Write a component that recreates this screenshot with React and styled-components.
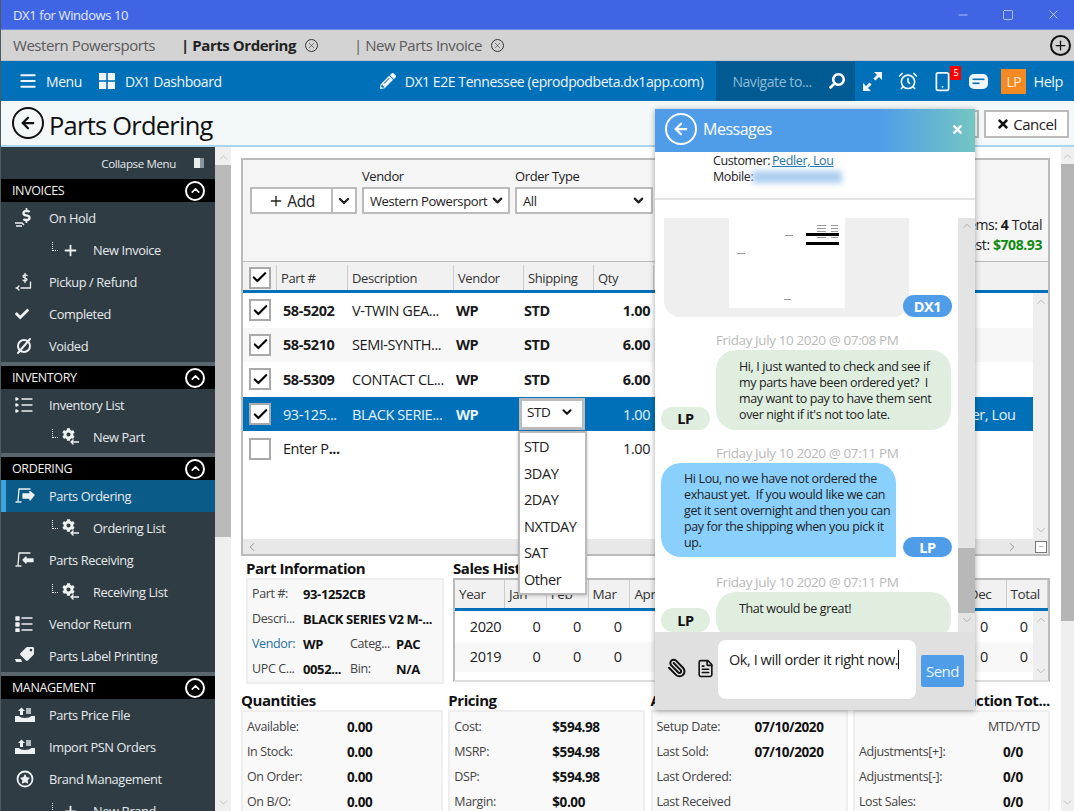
import React from 'react';
import styled, { createGlobalStyle } from 'styled-components';
import {
  Menu as MenuIcon, Minus, Square, X, AlarmClock, Smartphone, ChevronUp, ChevronDown,
  ChevronLeft, ChevronRight, Plus, Paperclip, FileText, ArrowLeft, Check,
} from 'lucide-react';
import { FaPencilAlt, FaSearch, FaCog, FaStar, FaTag, FaCheck, FaDollarSign, FaTimes } from 'react-icons/fa';

const GlobalStyle = createGlobalStyle`
  html, body {
    margin: 0;
    padding: 0;
    background: #fff;
  }
  * {
    box-sizing: border-box;
    letter-spacing: -0.03em;
  }
  svg {
    flex: none;
  }
  body {
    font-family: "Open Sans", "Noto Sans", "Liberation Sans", sans-serif;
    color: #1c1c1c;
  }
`;

const Page = styled.div`
  position: relative;
  width: 1074px;
  height: 811px;
  overflow: hidden;
  display: flex;
  flex-direction: column;
  border-left: 1px solid #4d5a62;
`;

/* window title bar */
const TitleBar = styled.div`
  height: 30px;
  background: #3f65e5;
  color: #e6ebfd;
  font-size: 13px;
  display: flex;
  align-items: center;
  padding-left: 12px;
  border-bottom: 1px solid #6d8aeb;
`;

const WindowControls = styled.div`
  margin-left: auto;
  display: flex;
  align-items: center;
  gap: 32px;
  padding-right: 13px;
  color: #fff;
`;

/* open tabs */
const TabBar = styled.div`
  height: 31px;
  background: #d3d3d3;
  display: flex;
  align-items: center;
  padding-left: 12px;
  font-size: 15px;
  color: #555;
  border-bottom: 1px solid #b9c4cc;
`;

const Tab = styled.div`
  display: flex;
  align-items: center;
  gap: 9px;
  margin-right: ${p => p.$gap}px;
  font-weight: ${p => (p.$active ? 700 : 400)};
  color: ${p => (p.$active ? '#222' : '#5a5a5a')};
  white-space: nowrap;
`;

const TabClose = styled.span`
  width: 13px;
  height: 13px;
  border: 1px solid #333;
  border-radius: 50%;
  display: flex;
  align-items: center;
  justify-content: center;
  color: #333;
`;

const AddTab = styled.span`
  margin-left: auto;
  margin-right: 3px;
  width: 21px;
  height: 21px;
  border: 2px solid #111;
  border-radius: 50%;
  display: flex;
  align-items: center;
  justify-content: center;
  color: #111;
`;

/* blue navigation bar */
const NavBar = styled.div`
  height: 40px;
  background: #0071b8;
  color: #f0f6fb;
  display: flex;
  align-items: center;
  padding-left: 17px;
  font-size: 14px;
  white-space: nowrap;
`;

const NavItem = styled.div`
  display: flex;
  align-items: center;
  gap: ${p => p.$gap || 9}px;
  margin-right: ${p => p.$right || 0}px;
`;

const NavIcons = styled.div`
  position: relative;
  display: flex;
  align-items: center;
  justify-content: center;
  width: ${p => p.$w}px;
  margin-right: ${p => p.$right || 0}px;
`;

const Spacer = styled.div`
  flex: 1;
`;

const SearchBox = styled.div`
  width: 139px;
  height: 100%;
  margin: 0 8px 0 13px;
  background: #005b93;
  color: #8fbcd8;
  display: flex;
  align-items: center;
  justify-content: space-between;
  padding: 0 10px 0 16px;
`;

const SearchGlass = styled(FaSearch)`
  color: #fff;
  transform: scaleX(-1);
`;

const Badge = styled.span`
  position: absolute;
  top: -5px;
  right: -12px;
  width: 11px;
  height: 14px;
  background: #f00;
  color: #fff;
  font-size: 9px;
  line-height: 14px;
  text-align: center;
`;

const Avatar = styled.div`
  width: 25px;
  height: 25px;
  background: #f58a24;
  color: #fde9d5;
  display: flex;
  align-items: center;
  justify-content: center;
  font-size: 14px;
  margin-right: 7px;
`;

const HelpLabel = styled.span`
  margin-right: 11px;
  font-size: 14.5px;
`;

/* page heading */
const Heading = styled.div`
  height: 46px;
  background: #f3f8fb;
  border-bottom: 2px solid #a9d5ee;
  display: flex;
  align-items: center;
  padding-left: 11px;
`;

const BackCircle = styled.div`
  width: ${p => p.$size}px;
  height: ${p => p.$size}px;
  flex: none;
  border: 2px solid ${p => p.$color};
  border-radius: 50%;
  color: ${p => p.$color};
  display: flex;
  align-items: center;
  justify-content: center;
`;

const PageTitle = styled.h1`
  margin: 3px auto 0 5px;
  font-size: 25.5px;
  font-weight: 400;
  color: #111;
`;

const HeadButton = styled.div`
  width: 85px;
  height: 28px;
  margin: 1px 5px 0 0;
  background: #fff;
  border: 2px solid #bbb;
  display: flex;
  align-items: center;
  justify-content: center;
  gap: 3px;
  font-size: 15px;
  color: #222;
`;

/* body: side menu + content */
const Body = styled.div`
  flex: 1;
  min-height: 0;
  display: flex;
`;

const Sidebar = styled.nav`
  width: 214px;
  flex: none;
  background: #2f3c44;
  color: #e6eaec;
  font-size: 12.8px;
`;

const Collapse = styled.div`
  height: 32px;
  display: flex;
  align-items: center;
  justify-content: flex-end;
  gap: 18px;
  padding-right: 11px;
  font-size: 11.5px;
`;

const CollapseBox = styled.span`
  width: 10px;
  height: 10px;
  background: #e9edef;
  border-right: 4px solid #8a969d;
`;

const SectionHead = styled.div`
  height: 23px;
  background: #000;
  box-sizing: content-box;
  border-top: ${p => (p.$first ? 'none' : '4px solid #5a666d')};
  display: flex;
  align-items: center;
  justify-content: space-between;
  padding: 0 10px 0 11px;
  font-size: 12.5px;
  color: #f0f0f0;
`;

const Toggle = styled.span`
  width: 20px;
  height: 20px;
  border: 2px solid #fff;
  border-radius: 50%;
  display: flex;
  align-items: center;
  justify-content: center;
  color: #fff;
`;

const SideItem = styled.div`
  position: relative;
  height: 32px;
  display: flex;
  align-items: center;
  padding-left: ${p => (p.$sub ? 51 : 14)}px;
  background: ${p => (p.$active ? '#0b5b89' : 'transparent')};
  border-left: ${p => (p.$active ? '5px solid #36a5e0' : 'none')};
  white-space: nowrap;
`;

const IconSlot = styled.span`
  width: ${p => (p.$sub ? 41 : 34)}px;
  margin-left: ${p => (p.$active ? -5 : 0)}px;
  display: flex;
  align-items: center;
  gap: 4px;
  flex: none;
  color: #eef1f2;
`;

const Hook = styled.span`
  width: 6px;
  height: 9px;
  margin-bottom: 8px;
  flex: none;
  border-left: 1px dotted #fff;
  border-bottom: 1px dotted #fff;
`;

const SideScroll = styled.div`
  width: 16px;
  flex: none;
  background: #efefef;
  display: flex;
  flex-direction: column;
  align-items: center;
  color: #b5b5b5;
  padding: 4px 0 2px;
`;

const SideThumb = styled.div`
  align-self: stretch;
  height: 372px;
  background: #b9b9b9;
  margin-top: 1px;
`;

const Content = styled.main`
  flex: 1;
  min-width: 0;
  background: #fff;
  padding: 11px 11px 0 10px;
  display: flex;
  flex-direction: column;
`;

const PageScroll = styled.div`
  width: 13px;
  flex: none;
  background: #efefef;
  display: flex;
  flex-direction: column;
  align-items: center;
  color: #b5b5b5;
  padding: 3px 0 2px;
`;

const PageThumb = styled.div`
  align-self: stretch;
  height: 457px;
  margin-top: 1px;
  background: #b5b5b5;
`;

const ScrollGap = styled.div`
  flex: 1;
`;

/* filter toolbar */
const Filters = styled.section`
  flex: none;
  height: 104px;
  background: #f5f5f5;
  border: 2px solid #bbb;
  border-bottom-width: 1px;
  display: flex;
  align-items: flex-start;
  padding: 8px 6px 0 7px;
`;

const Field = styled.div`
  margin-left: ${p => p.$left || 0}px;
  display: flex;
  flex-direction: column;
  font-size: 13px;
`;

const FieldLabel = styled.label`
  height: 17px;
  line-height: 17px;
  margin-bottom: 2px;
`;

const SplitButton = styled.div`
  display: flex;
`;

const Control = styled.div`
  width: ${p => p.$w}px;
  height: 27px;
  background: #fff;
  border: 2px solid #bbb;
  border-left-width: ${p => (p.$joined ? 0 : 2)}px;
  display: flex;
  align-items: center;
  justify-content: ${p => (p.$center ? 'center' : 'space-between')};
  gap: 3px;
  padding: ${p => (p.$center ? '0' : '0 5px 0 6px')};
  font-size: ${p => (p.$big ? 15.5 : 13)}px;
  white-space: nowrap;
  color: #222;
`;

const Totals = styled.div`
  margin: 47px 0 0 auto;
  text-align: right;
  font-size: 14px;
  line-height: 20px;
  white-space: nowrap;
`;

const Money = styled.b`
  color: #0f8a12;
`;

/* parts grid */
const PartsGrid = styled.section`
  height: 294px;
  border: 2px solid #bbb;
  border-top: none;
  display: flex;
  flex-direction: column;
  flex: none;
  font-size: 14.5px;
`;

const HeaderRow = styled.div`
  flex: none;
  height: 31px;
  padding-top: 3px;
  background: #f1f1f1;
  border-bottom: 3px solid #0071b8;
  display: grid;
  grid-template-columns: 34px 71px 106px 70px 70px 60px;
  font-size: 13px;
  color: #333;
`;

const HeaderCell = styled.div`
  display: flex;
  align-items: center;
  padding-left: 4px;
  border-right: 1px solid #ccc;
  &:first-child {
    justify-content: center;
    padding-left: 0;
  }
`;

const GridBody = styled.div`
  flex: 1;
  min-height: 0;
  display: flex;
`;

const Rows = styled.div`
  flex: 1;
  min-width: 0;
`;

const Row = styled.div`
  height: 34.6px;
  display: grid;
  grid-template-columns: 34px 71px 106px 70px 70px 60px 1fr;
  align-items: center;
  background: ${p => (p.$selected ? '#0071b8' : p.$striped ? '#f7f7f7' : '#fff')};
  color: ${p => (p.$selected ? '#e5f2fa' : '#1a1a1a')};
`;

const Cell = styled.div`
  position: relative;
  padding-left: ${p => p.$pad || 0}px;
  font-weight: ${p => (p.$bold ? 700 : 400)};
  text-align: ${p => (p.$right ? 'right' : 'left')};
  padding-right: ${p => (p.$right ? 4 : 0)}px;
  white-space: nowrap;
`;

const CheckBox = styled.span`
  width: 22px;
  height: 22px;
  margin-left: ${p => p.$left || 0}px;
  background: #fff;
  border: 2px solid #a9a9a9;
  display: flex;
  align-items: center;
  justify-content: center;
  color: #000;
`;

const VScroll = styled.div`
  width: 15px;
  flex: none;
  background: #eee;
  display: flex;
  flex-direction: column;
  align-items: center;
  justify-content: space-between;
  color: #b5b5b5;
  padding: 2px 0;
`;

const HScroll = styled.div`
  flex: none;
  height: 15px;
  background: #e8e8e8;
  display: flex;
  align-items: center;
  justify-content: space-between;
  padding: 0 1px 0 2px;
  color: #888;
`;

const HScrollEnd = styled.span`
  display: flex;
  align-items: center;
`;

const CornerBox = styled.span`
  width: 12px;
  height: 12px;
  margin-left: 16px;
  background: #fff;
  border: 1px solid #777;
  display: flex;
  align-items: center;
  justify-content: center;
  font-size: 9px;
  line-height: 1;
`;

const ShipSelect = styled.div`
  width: 66px;
  height: 32px;
  margin-left: -5px;
  background: #fff;
  border: 3px solid #bbb;
  color: #222;
  font-size: 13.5px;
  display: flex;
  align-items: center;
  justify-content: space-between;
  padding: 0 8px 4px 5px;
`;

const ShipList = styled.ul`
  position: absolute;
  z-index: 5;
  top: 33px;
  left: -6px;
  width: 69px;
  margin: 0;
  padding: 1px 0 0 4px;
  list-style: none;
  background: #fff;
  border: 2px solid #bbb;
  box-shadow: 0 1px 3px rgba(0, 0, 0, 0.2);
  color: #222;
  font-size: 14.5px;
`;

const ShipOption = styled.li`
  height: 26.5px;
  line-height: 26px;
`;

/* part details + sales */
const DetailRow = styled.div`
  display: flex;
  padding: 4px 0 0 5px;
  flex: none;
  gap: 9px;
`;

const SectionTitle = styled.h3`
  margin: 0 0 2px;
  height: 16px;
  line-height: 16px;
  font-size: 15px;
  font-weight: 700;
  color: #111;
  white-space: nowrap;
  text-align: ${p => (p.$right ? 'right' : 'left')};
`;

const Block = styled.div`
  width: ${p => p.$w}px;
  flex: ${p => (p.$grow ? 1 : 'none')};
  min-width: 0;
`;

const InfoCard = styled.div`
  height: 106px;
  background: #f8f8f8;
  border: 2px solid #eee;
  display: grid;
  grid-template-columns: 51px 47px 46px 1fr;
  grid-auto-rows: 25px;
  align-items: center;
  padding: 1px 4px;
  font-size: 12.5px;
  white-space: nowrap;
  color: #444;
`;

const InfoLabel = styled.span`
  color: ${p => (p.$link ? '#1e6f9f' : '#444')};
`;

const InfoValue = styled.b`
  color: #111;
  font-size: 13px;
  grid-column: ${p => (p.$wide ? 'span 3' : 'auto')};
`;

const SalesGrid = styled.div`
  height: 104px;
  border: 2px solid #bbb;
  border-bottom-color: #ddd;
  display: flex;
  flex-direction: column;
  font-size: 13.5px;
`;

const SalesHead = styled.div`
  flex: none;
  height: 31px;
  background: #f1f1f1;
  border-bottom: 3px solid #0071b8;
  display: grid;
  grid-template-columns: 50px repeat(12, 41.8px) 1fr;
  color: #333;
`;

const SalesHeadCell = styled.div`
  display: flex;
  align-items: center;
  padding-left: 4px;
  border-right: 1px solid #ccc;
`;

const SalesRow = styled.div`
  height: 30.5px;
  background: ${p => (p.$striped ? '#f8f8f8' : '#fff')};
  display: grid;
  grid-template-columns: 61px repeat(12, 40.7px) 1fr;
  align-items: center;
  text-align: center;
  font-size: 14.5px;
  color: #222;
`;

const SalesTotal = styled.span`
  padding-left: 10px;
`;

/* bottom stat cards */
const StatsRow = styled.div`
  margin-top: 8px;
  display: grid;
  grid-template-columns: 202px repeat(3, 197px);
  column-gap: 5.3px;
  flex: none;
`;

const StatCard = styled.div`
  height: 110px;
  background: #f9f9f9;
  border: 2px solid #eee;
  border-bottom: none;
  padding: 2px 4px;
  display: grid;
  grid-template-columns: ${p => p.$label}px 1fr;
  grid-auto-rows: 25px;
  align-items: center;
  font-size: 12.5px;
  color: #444;
  white-space: nowrap;
`;

const StatValue = styled.b`
  color: #111;
  font-size: 13.5px;
`;

const StatNote = styled.span`
  color: #444;
  margin-left: -15px;
`;

/* messages popup, lies over the page */
const Popup = styled.aside`
  position: absolute;
  z-index: 10;
  left: 654px;
  top: 109px;
  width: 320px;
  height: 601px;
  background: #fff;
  box-shadow: 0 1px 6px rgba(0, 0, 0, 0.35);
  display: flex;
  flex-direction: column;
  font-size: 13px;
  color: #222;
`;

const PopupHead = styled.header`
  height: 43px;
  flex: none;
  background: linear-gradient(90deg, #4f9de9 0%, #4f9de9 70%, #74c6c3 100%);
  color: #fff;
  display: flex;
  align-items: center;
  padding: 0 11px 3px 10px;
  gap: 6px;
  font-size: 16px;
`;

const PopupClose = styled.span`
  margin-left: auto;
  display: flex;
`;

const CustomerInfo = styled.div`
  height: 48px;
  flex: none;
  padding: 1px 0 0 58px;
  line-height: 16px;
  border-bottom: 2px solid #e4e4e4;
  font-size: 12.5px;
`;

const CustomerLink = styled.a`
  color: #1f74a6;
  text-decoration: underline;
  margin-left: -1px;
`;

const BlurredNumber = styled.span`
  display: inline-block;
  width: 90px;
  height: 12px;
  margin-left: -4px;
  vertical-align: -2px;
  background: #aacdf0;
  filter: blur(3px);
`;

const Pane = styled.div`
  flex: 1;
  min-height: 0;
  display: flex;
  padding-top: 18px;
`;

const MessageList = styled.div`
  flex: 1;
  min-width: 0;
  overflow: hidden;
  padding-left: 9px;
`;

const Attachment = styled.div`
  width: 245px;
  height: 99px;
  flex: none;
  background: #efefef;
  border-radius: 0 0 16px 16px;
  display: flex;
  justify-content: center;
  align-items: flex-start;
`;

const MsgRow = styled.div`
  display: flex;
  align-items: flex-end;
  margin-left: ${p => (p.$inbound ? -3 : 0)}px;
  gap: ${p => p.$gap || 0}px;
`;

const Stamp = styled.div`
  margin: ${p => p.$top}px 0 2px 52px;
  height: 16px;
  line-height: 16px;
  color: #b9b9b9;
  font-size: 13.5px;
  white-space: nowrap;
`;

const Bubble = styled.div`
  width: 235px;
  height: ${p => p.$h}px;
  flex: none;
  background: ${p => (p.$blue ? '#89d0ff' : '#e0eedf')};
  border-radius: ${p => (p.$blue ? '20px 20px 0 20px' : '20px')};
  padding: ${p => (p.$blue ? '8px 0 0 23px' : '9px 12px 0 23px')};
  line-height: 16px;
  font-size: 12.5px;
  color: #222;
`;

const Pill = styled.span`
  width: 49px;
  height: ${p => p.$h || 23}px;
  flex: none;
  margin-left: ${p => p.$left || 0}px;
  margin-bottom: ${p => p.$bottom || 0}px;
  border-radius: 12px;
  background: ${p => (p.$blue ? '#4f9de9' : '#e0eedf')};
  color: ${p => (p.$blue ? '#fff' : '#111')};
  font-weight: 700;
  font-size: 14.5px;
  display: flex;
  align-items: center;
  justify-content: center;
`;

const MsgScroll = styled.div`
  width: 17px;
  flex: none;
  background: #e4e4e4;
  display: flex;
  flex-direction: column;
  align-items: center;
  color: #aaa;
  padding-top: 1px;
`;

const MsgThumb = styled.div`
  align-self: stretch;
  height: 65px;
  background: #b8b8b8;
  margin: 315px 0 0;
`;

const Composer = styled.div`
  height: 78px;
  flex: none;
  background: #e0e0e0;
  display: flex;
  align-items: flex-start;
  padding: 8px 11px 0 12px;
`;

const ComposerTools = styled.div`
  width: 51px;
  margin-top: 18px;
  display: flex;
  align-items: center;
  gap: 9px;
  color: #111;
  flex: none;
`;

const ClipIcon = styled(Paperclip)`
  transform: scaleX(-1);
`;

const TextBox = styled.div`
  width: 198px;
  height: 59px;
  background: #fff;
  border-radius: 8px;
  padding: 10px 11px;
  font-size: 14.5px;
  color: #222;
  white-space: nowrap;
`;

const Caret = styled.span`
  border-right: 1px solid #111;
`;

const SendButton = styled.div`
  width: 43px;
  height: 32px;
  margin: 15px 0 0 5px;
  background: #4f9de9;
  color: #eaf4fd;
  border-radius: 2px;
  font-size: 15px;
  display: flex;
  align-items: center;
  justify-content: center;
`;

/* small drawn icons */
const Svg = ({ w = 20, h = 20, children, stroke = 'none', fill = 'currentColor', sw = 1.5 }) => (
  <svg width={w} height={h} viewBox={`0 0 ${w} ${h}`} fill={fill} stroke={stroke} strokeWidth={sw} strokeLinecap="round" strokeLinejoin="round">
    {children}
  </svg>
);

/* an icon glyph with a small drawn extra laid over it */
const IconStack = styled.span`
  position: relative;
  display: flex;
  align-items: flex-start;
  justify-content: ${p => (p.$center ? 'center' : 'flex-start')};
  width: ${p => p.$w}px;
  height: ${p => p.$h}px;
  & > svg:last-child {
    position: absolute;
    left: 0;
    top: 0;
  }
`;

const HoldGlyph = styled(FaDollarSign)`
  margin-left: 4px;
`;

const TagGlyph = styled(FaTag)`
  margin-left: 5px;
  transform: rotate(90deg);
`;

const StarGlyph = styled(FaStar)`
  margin-top: 4px;
`;

const TileIcon = () => (
  <Svg w={16} h={16}>
    <rect x="0" y="0" width="7.2" height="7.2" />
    <rect x="8.8" y="0" width="7.2" height="7.2" />
    <rect x="0" y="8.8" width="7.2" height="7.2" />
    <rect x="8.8" y="8.8" width="7.2" height="7.2" />
  </Svg>
);

const ExpandIcon = () => (
  <Svg w={19} h={19}>
    <path d="M11 0h8v8l-3-3-3.6 3.6-2-2L14 3z" />
    <path d="M8 19H0v-8l3 3 3.6-3.6 2 2L5 16z" />
  </Svg>
);

const ChatIcon = () => (
  <Svg w={19} h={15}>
    <rect x="0" y="0" width="19" height="15" rx="5" />
    <rect x="3.5" y="4.5" width="12" height="1.6" fill="#0071b8" />
    <rect x="3.5" y="8.5" width="7" height="1.6" fill="#0071b8" />
  </Svg>
);

const BackArrow = () => <ArrowLeft size={18} strokeWidth={3} />;

const HoldIcon = () => (
  <IconStack $w={20} $h={20}>
    <HoldGlyph size={15} />
    <svg width="20" height="20" fill="none" stroke="currentColor" strokeWidth="1.4">
      <path d="M0 15h7l2 2M1 18h6" />
    </svg>
  </IconStack>
);

const RefundIcon = () => (
  <Svg w={20} h={20} fill="none" stroke="currentColor" sw={1.3}>
    <path d="M15.5 10v6H6M3 16l-2 0M4 14l-2 2 2 2" />
    <path d="M12 3.5c-1-1-4-1-4 .8s4 1.2 4 3-3 2-4 .8M10 1.5v9" />
  </Svg>
);

const VoidIcon = () => (
  <Svg w={18} h={18} fill="none" stroke="currentColor" sw={2}>
    <circle cx="9" cy="9" r="6" />
    <path d="M3 16L15 2" />
  </Svg>
);

const ListIcon = ({ faint }) => (
  <Svg w={18} h={16} fill="none" stroke="currentColor" sw={1.4}>
    <path d="M7 2h10M7 8h10M7 14h10" />
    <path d={faint ? 'M1 1h3v3H1zM1 7h3v3H1zM1 13h3v3H1z' : 'M1 1l2 1-2 1zM1 7l2 1-2 1zM1 13l2 1-2 1z'} fill="currentColor" />
  </Svg>
);

const TransferIcon = ({ flip }) => (
  <Svg w={20} h={16} fill="none" stroke="currentColor" sw={1.3}>
    <path d="M3 13L4 1h11" />
    <path d="M1 14h5" strokeDasharray="1 1" />
    {flip
      ? <path d="M8 8l3-3v2h7v2.5H11V11z" fill="currentColor" />
      : <path d="M19 7l-4-3.5V6H8v4h7v2z" fill="currentColor" />}
  </Svg>
);

const GearArrow = () => (
  <IconStack $w={18} $h={18}>
    <FaCog size={13} />
    <svg width="18" height="18" fill="none" stroke="currentColor" strokeWidth="1.3">
      <path d="M9 14h8M11.5 11.5L9 14l2.5 2.5" />
    </svg>
  </IconStack>
);

const LabelIcon = () => (
  <IconStack $w={20} $h={18}>
    <TagGlyph size={14} />
    <svg width="20" height="18" fill="currentColor">
      <path d="M0 12h6l1 3H1z" />
    </svg>
  </IconStack>
);

const TrayIcon = () => (
  <Svg w={20} h={16} fill="currentColor">
    <path d="M0 9h4c1 2.5 11 2.5 12 0h4v6H0z" />
    <path d="M5 8V4H3l3.5-3.5L10 4H8v4z" />
    <path d="M11 1h5v6h-5z" opacity=".7" />
  </Svg>
);

const BrandIcon = () => (
  <IconStack $w={20} $h={18} $center>
    <StarGlyph size={10} />
    <svg width="20" height="18" fill="none" stroke="currentColor" strokeWidth="1.8">
      <circle cx="10" cy="9" r="7.5" />
    </svg>
  </IconStack>
);

const menu = [
  {
    title: 'INVOICES', items: [
      { label: 'On Hold', icon: <HoldIcon /> },
      { label: 'New Invoice', sub: true, icon: <Plus size={17} strokeWidth={2.5} /> },
      { label: 'Pickup / Refund', icon: <RefundIcon /> },
      { label: 'Completed', icon: <FaCheck size={14} /> },
      { label: 'Voided', icon: <VoidIcon /> },
    ],
  },
  {
    title: 'INVENTORY', items: [
      { label: 'Inventory List', icon: <ListIcon /> },
      { label: 'New Part', sub: true, icon: <GearArrow /> },
    ],
  },
  {
    title: 'ORDERING', items: [
      { label: 'Parts Ordering', active: true, icon: <TransferIcon /> },
      { label: 'Ordering List', sub: true, icon: <GearArrow /> },
      { label: 'Parts Receiving', icon: <TransferIcon flip /> },
      { label: 'Receiving List', sub: true, icon: <GearArrow /> },
      { label: 'Vendor Return', icon: <ListIcon faint /> },
      { label: 'Parts Label Printing', icon: <LabelIcon /> },
    ],
  },
  {
    title: 'MANAGEMENT', items: [
      { label: 'Parts Price File', icon: <TrayIcon /> },
      { label: 'Import PSN Orders', icon: <TrayIcon /> },
      { label: 'Brand Management', icon: <BrandIcon /> },
      { label: 'New Brand', sub: true, icon: <Plus size={17} strokeWidth={2.5} /> },
    ],
  },
];

const parts = [
  { no: '58-5202', desc: 'V-TWIN GEA...', qty: '1.00' },
  { no: '58-5210', desc: 'SEMI-SYNTH...', qty: '6.00', striped: true },
  { no: '58-5309', desc: 'CONTACT CL...', qty: '6.00' },
];

const shipping = ['STD', '3DAY', '2DAY', 'NXTDAY', 'SAT', 'Other'];

// the middle months sit behind the messages popup, so their cells stay empty
const months = ['Jan', 'Feb', 'Mar', 'Apr', '', '', '', '', '', '', '', 'Dec'];

const stats = [
  {
    title: 'Quantities', label: 100,
    rows: [['Available:', '0.00'], ['In Stock:', '0.00'], ['On Order:', '0.00'], ['On B/O:', '0.00']],
  },
  {
    title: 'Pricing', label: 98,
    rows: [['Cost:', '$594.98'], ['MSRP:', '$594.98'], ['DSP:', '$594.98'], ['Margin:', '$0.00']],
  },
  {
    title: 'Activity', label: 98,
    rows: [['Setup Date:', '07/10/2020'], ['Last Sold:', '07/10/2020'], ['Last Ordered:', ''], ['Last Received', '']],
  },
  {
    title: 'Transaction Tot...', label: 144, right: true,
    rows: [['', 'MTD/YTD', true], ['Adjustments[+]:', '0/0'], ['Adjustments[-]:', '0/0'], ['Lost Sales:', '0/0']],
  },
];

function AppTabs() {
  return (
    <TabBar>
      <Tab $gap={26}>Western Powersports</Tab>
      <Tab $active $gap={36}>
        | Parts Ordering
        <TabClose><X size={9} strokeWidth={1.5} /></TabClose>
      </Tab>
      <Tab>
        | New Parts Invoice
        <TabClose><X size={9} strokeWidth={1.5} /></TabClose>
      </Tab>
      <AddTab><Plus size={15} strokeWidth={2} /></AddTab>
    </TabBar>
  );
}

function AppNav() {
  return (
    <NavBar>
      <NavItem $gap={8} $right={17}><MenuIcon size={20} strokeWidth={2.4} />Menu</NavItem>
      <NavItem $gap={10}><TileIcon />DX1 Dashboard</NavItem>
      <Spacer />
      <NavItem $gap={9}><FaPencilAlt size={16} />DX1 E2E Tennessee (eprodpodbeta.dx1app.com)</NavItem>
      <SearchBox>
        Navigate to...
        <SearchGlass size={16} />
      </SearchBox>
      <NavIcons $w={19} $right={16}><ExpandIcon /></NavIcons>
      <NavIcons $w={19} $right={19}><AlarmClock size={20} strokeWidth={2} /></NavIcons>
      <NavIcons $w={13} $right={20}>
        <Smartphone size={21} strokeWidth={2} />
        <Badge>5</Badge>
      </NavIcons>
      <NavIcons $w={19} $right={13}><ChatIcon /></NavIcons>
      <Avatar>LP</Avatar>
      <HelpLabel>Help</HelpLabel>
    </NavBar>
  );
}

function SideMenu() {
  return (
    <Sidebar>
      <Collapse>Collapse Menu <CollapseBox /></Collapse>
      {menu.map((section, i) => (
        <div key={section.title}>
          <SectionHead $first={i === 0}>
            {section.title}
            <Toggle><ChevronUp size={13} strokeWidth={3} /></Toggle>
          </SectionHead>
          {section.items.map(item => (
            <SideItem key={item.label} $sub={item.sub} $active={item.active}>
              <IconSlot $sub={item.sub} $active={item.active}>
                {item.sub && <Hook />}
                {item.icon}
              </IconSlot>
              {item.label}
            </SideItem>
          ))}
        </div>
      ))}
    </Sidebar>
  );
}

function PartRow({ no, desc, qty, striped }) {
  return (
    <Row $striped={striped}>
      <CheckBox $left={6}><Check size={17} strokeWidth={3} /></CheckBox>
      <Cell $bold $pad={6}>{no}</Cell>
      <Cell $pad={4}>{desc}</Cell>
      <Cell $bold $pad={2}>WP</Cell>
      <Cell $bold>STD</Cell>
      <Cell $bold $right>{qty}</Cell>
    </Row>
  );
}

function PartsTable() {
  return (
    <PartsGrid>
      <HeaderRow>
        <HeaderCell><CheckBox><Check size={17} strokeWidth={3} /></CheckBox></HeaderCell>
        <HeaderCell>Part #</HeaderCell>
        <HeaderCell>Description</HeaderCell>
        <HeaderCell>Vendor</HeaderCell>
        <HeaderCell>Shipping</HeaderCell>
        <HeaderCell>Qty</HeaderCell>
      </HeaderRow>
      <GridBody>
        <Rows>
          {parts.map(p => <PartRow key={p.no} {...p} />)}
          <Row $selected>
            <CheckBox $left={6}><Check size={17} strokeWidth={3} /></CheckBox>
            <Cell $pad={6}>93-125...</Cell>
            <Cell $pad={4}>BLACK SERIE...</Cell>
            <Cell $bold $pad={2}>WP</Cell>
            <Cell>
              <ShipSelect>STD <ChevronDown size={14} strokeWidth={3.5} color="#111" /></ShipSelect>
              <ShipList>
                {shipping.map(s => <ShipOption key={s}>{s}</ShipOption>)}
              </ShipList>
            </Cell>
            <Cell $right>1.00</Cell>
            <Cell $pad={290}>Pedler, Lou</Cell>
          </Row>
          <Row>
            <CheckBox $left={6} />
            <Cell $pad={6}>Enter P<b>...</b></Cell>
            <Cell />
            <Cell />
            <Cell />
            <Cell $right>1.00</Cell>
          </Row>
        </Rows>
        <VScroll>
          <ChevronUp size={14} strokeWidth={1.5} />
          <ChevronDown size={14} strokeWidth={1.5} />
        </VScroll>
      </GridBody>
      <HScroll>
        <ChevronLeft size={14} strokeWidth={1.5} />
        <HScrollEnd>
          <ChevronRight size={14} strokeWidth={1.5} />
          <CornerBox>−</CornerBox>
        </HScrollEnd>
      </HScroll>
    </PartsGrid>
  );
}

function PartDetails() {
  return (
    <DetailRow>
      <Block $w={198}>
        <SectionTitle>Part Information</SectionTitle>
        <InfoCard>
          <InfoLabel>Part #:</InfoLabel><InfoValue $wide>93-1252CB</InfoValue>
          <InfoLabel>Descri...</InfoLabel><InfoValue $wide>BLACK SERIES V2 M-...</InfoValue>
          <InfoLabel $link>Vendor:</InfoLabel><InfoValue>WP</InfoValue>
          <InfoLabel>Categ...</InfoLabel><InfoValue>PAC</InfoValue>
          <InfoLabel>UPC C...</InfoLabel><InfoValue>0052...</InfoValue>
          <InfoLabel>Bin:</InfoLabel><InfoValue>N/A</InfoValue>
        </InfoCard>
      </Block>
      <Block $grow>
        <SectionTitle>Sales History</SectionTitle>
        <SalesGrid>
          <SalesHead>
            <SalesHeadCell>Year</SalesHeadCell>
            {months.map((m, i) => <SalesHeadCell key={i}>{m}</SalesHeadCell>)}
            <SalesHeadCell>Total</SalesHeadCell>
          </SalesHead>
          <GridBody>
            <Rows>
              {['2020', '2019'].map((year, y) => (
                <SalesRow key={year} $striped={y === 1}>
                  <span>{year}</span>
                  {months.map((m, i) => <span key={i}>{m && m !== 'Apr' ? '0' : ''}</span>)}
                  <SalesTotal>0</SalesTotal>
                </SalesRow>
              ))}
            </Rows>
            <VScroll>
              <ChevronUp size={14} strokeWidth={1.5} />
              <ChevronDown size={14} strokeWidth={1.5} />
            </VScroll>
          </GridBody>
        </SalesGrid>
      </Block>
    </DetailRow>
  );
}

function MessagesPopup() {
  return (
    <Popup>
      <PopupHead>
        <BackCircle $size={32} $color="#fff"><BackArrow /></BackCircle>
        Messages
        <PopupClose><FaTimes size={13} /></PopupClose>
      </PopupHead>
      <CustomerInfo>
        <div>Customer: <CustomerLink>Pedler, Lou</CustomerLink></div>
        <div>Mobile: <BlurredNumber /></div>
      </CustomerInfo>
      <Pane>
        <MessageList>
          <MsgRow>
            <Attachment>
              <svg width="116" height="90" viewBox="0 0 116 90">
                <rect width="116" height="90" fill="#fff" />
                <g fill="#999">
                  <rect x="88" y="7" width="9" height="1" /><rect x="102" y="7" width="7" height="1" />
                  <rect x="88" y="10" width="9" height="1" /><rect x="102" y="10" width="7" height="1" />
                  <rect x="88" y="13" width="9" height="1" /><rect x="102" y="13" width="7" height="1" />
                  <rect x="56" y="17" width="8" height="1" />
                  <rect x="88" y="19" width="9" height="1" /><rect x="102" y="19" width="7" height="1" />
                  <rect x="8" y="35" width="8" height="1" />
                  <rect x="55" y="81" width="7" height="1" />
                </g>
                <rect x="77" y="15" width="33" height="3" fill="#000" />
                <rect x="77" y="24" width="33" height="3" fill="#000" />
              </svg>
            </Attachment>
            <Pill $blue $h={22} $left={-6}>DX1</Pill>
          </MsgRow>
          <Stamp $top={15}>Friday July 10 2020 @ 07:08 PM</Stamp>
          <MsgRow $inbound $gap={6}>
            <Pill>LP</Pill>
            <Bubble $h={80}>
              Hi, I just wanted to check and see if my parts have been ordered yet?&nbsp; I may want to pay to have them sent over night if it's not too late.
            </Bubble>
          </MsgRow>
          <Stamp $top={15}>Friday July 10 2020 @ 07:11 PM</Stamp>
          <MsgRow $inbound $gap={7}>
            <Bubble $blue $h={94}>
              Hi Lou, no we have not ordered the exhaust yet.&nbsp; If you would like we can get it sent overnight and then you can pay for the shipping when you pick it up.
            </Bubble>
            <Pill $blue $h={20}>LP</Pill>
          </MsgRow>
          <Stamp $top={17}>Friday July 10 2020 @ 07:11 PM</Stamp>
          <MsgRow $inbound $gap={6}>
            <Pill $h={24} $bottom={8}>LP</Pill>
            <Bubble $h={48}>That would be great!</Bubble>
          </MsgRow>
        </MessageList>
        <MsgScroll>
          <ChevronUp size={14} strokeWidth={1.5} />
          <MsgThumb />
          <ChevronDown size={14} strokeWidth={1.5} />
        </MsgScroll>
      </Pane>
      <Composer>
        <ComposerTools>
          <ClipIcon size={20} strokeWidth={2.4} />
          <FileText size={19} strokeWidth={2} />
        </ComposerTools>
        <TextBox><Caret>Ok, I will order it right now.</Caret></TextBox>
        <SendButton>Send</SendButton>
      </Composer>
    </Popup>
  );
}

export default function App() {
  return (
    <Page>
      <GlobalStyle />
      <TitleBar>
        DX1 for Windows 10
        <WindowControls>
          <Minus size={14} strokeWidth={1} />
          <Square size={12} strokeWidth={1.2} />
          <X size={15} strokeWidth={1} />
        </WindowControls>
      </TitleBar>
      <AppTabs />
      <AppNav />
      <Heading>
        <BackCircle $size={32} $color="#111"><BackArrow /></BackCircle>
        <PageTitle>Parts Ordering</PageTitle>
        <HeadButton>Save</HeadButton>
        <HeadButton><FaTimes size={14} color="#111" /> Cancel</HeadButton>
      </Heading>
      <Body>
        <SideMenu />
        <SideScroll>
          <ChevronUp size={13} strokeWidth={1.5} />
          <SideThumb />
          <ScrollGap />
          <ChevronDown size={13} strokeWidth={1.5} />
        </SideScroll>
        <Content>
          <Filters>
            <Field>
              <FieldLabel>&nbsp;</FieldLabel>
              <SplitButton>
                <Control $w={83} $center $big><Plus size={16} strokeWidth={2} /> Add</Control>
                <Control $w={24} $center $joined><ChevronDown size={16} strokeWidth={3.5} /></Control>
              </SplitButton>
            </Field>
            <Field $left={5}>
              <FieldLabel>Vendor</FieldLabel>
              <Control $w={148}>Western Powersport <ChevronDown size={15} strokeWidth={3.5} /></Control>
            </Field>
            <Field $left={5}>
              <FieldLabel>Order Type</FieldLabel>
              <Control $w={138}>All <ChevronDown size={15} strokeWidth={3.5} /></Control>
            </Field>
            <Totals>
              <div>Total Items: <b>4</b> Total</div>
              <div>Cost: <Money>$708.93</Money></div>
            </Totals>
          </Filters>
          <PartsTable />
          <PartDetails />
          <StatsRow>
            {stats.map(card => (
              <div key={card.title}>
                <SectionTitle $right={card.right}>{card.title}</SectionTitle>
                <StatCard $label={card.label}>
                  {card.rows.map(([label, value, note]) => (
                    <React.Fragment key={label + value}>
                      <span>{label}</span>
                      {note ? <StatNote>{value}</StatNote> : <StatValue>{value}</StatValue>}
                    </React.Fragment>
                  ))}
                </StatCard>
              </div>
            ))}
          </StatsRow>
        </Content>
        <PageScroll>
          <ChevronUp size={13} strokeWidth={1.5} />
          <PageThumb />
          <ScrollGap />
          <ChevronDown size={13} strokeWidth={1.5} />
        </PageScroll>
      </Body>
      <MessagesPopup />
    </Page>
  );
}
